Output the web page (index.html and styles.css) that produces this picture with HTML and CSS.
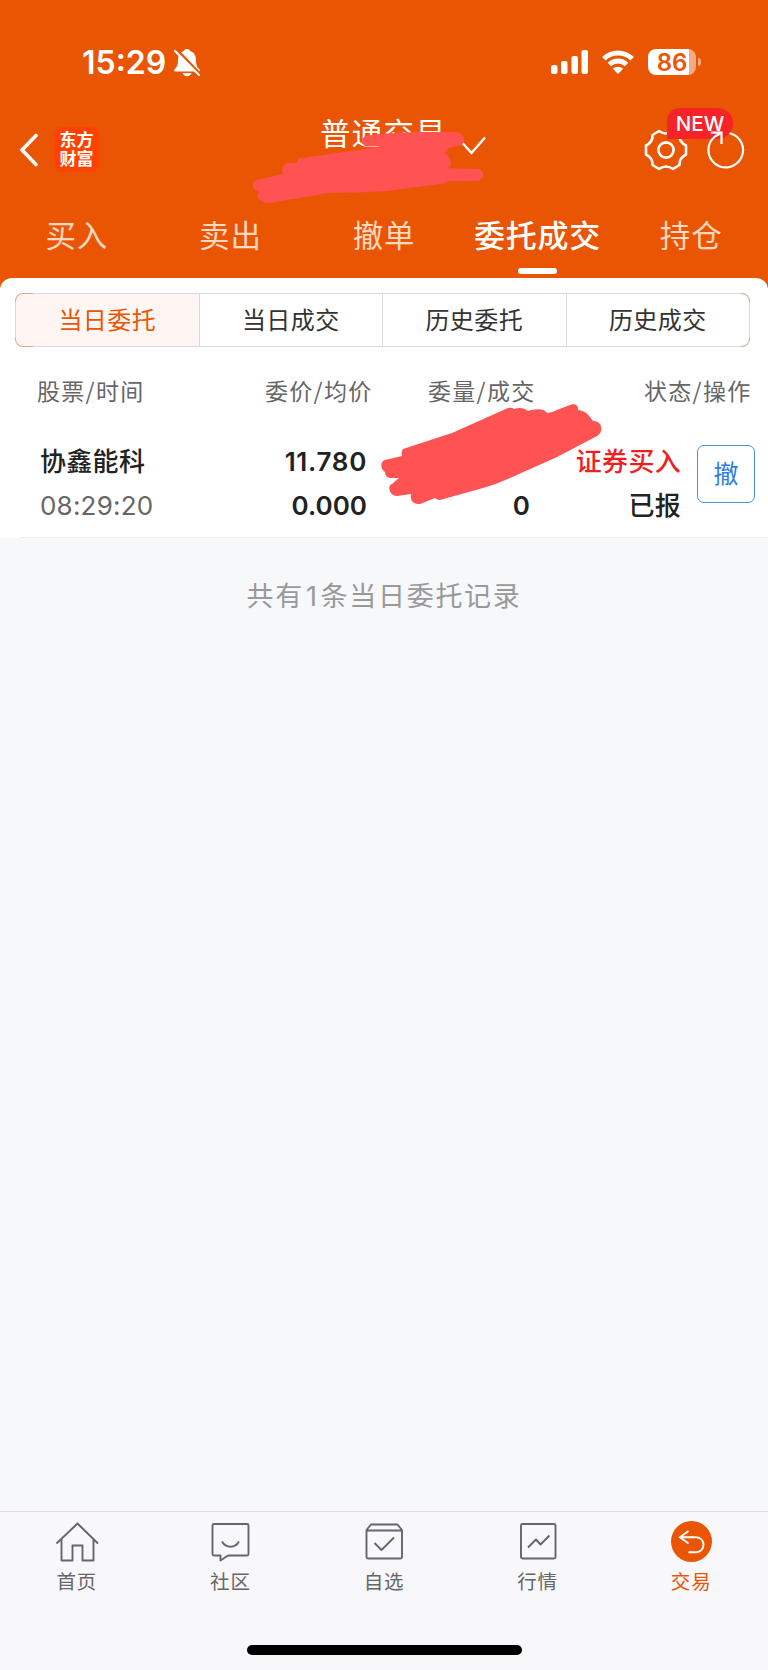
FILE: index.html
```
<!DOCTYPE html>
<html lang="zh-CN">

<head>
<meta charset="utf-8">
<title>委托成交</title>
<link rel="stylesheet" href="styles.css">
</head>

<body>

<div class="header">
	<div class="status-bar">
		<span class="clock">15:29</span>
		<svg class="bell" width="28" height="30" viewBox="0 0 28 30">
			<path d="M14 1c-2 0-3 1.200-3.400 2.200C6.500 4.500 5 8 5 12c0 5-1 7-3.500 9.500-.8 1-.3 2 .8 2h23.400c1.100 0 1.600-1 .8-2C24 19 23 17 23 12c0-4-1.500-7.500-5.600-8.800C17 2.200 16 1 14 1zM9.500 25h9c-.6 2-2.300 3.200-4.500 3.200S10.100 27 9.500 25z" fill="#fff"/>
			<path d="M3 1l24 25" stroke="#ea5504" stroke-width="3"/>
			<path d="M2 3l24 24" stroke="#fff" stroke-width="2.200" stroke-linecap="round"/>
		</svg>
		<svg class="signal" width="38" height="24" viewBox="0 0 38 24">
			<g fill="#fff">
				<rect x="0" y="15" width="6.500" height="9" rx="2"/>
				<rect x="10" y="11" width="6.500" height="13" rx="2"/>
				<rect x="20.500" y="6" width="6.500" height="18" rx="2"/>
				<rect x="30.500" y="0" width="6.500" height="24" rx="2"/>
			</g>
		</svg>
		<svg class="wifi" width="32" height="24" viewBox="0 0 32 24">
			<g fill="none" stroke="#fff" stroke-width="5">
				<path d="M1.800 8.800a20.200 20.200 0 0 1 28.400 0"/>
				<path d="M7.400 14.500a12.200 12.200 0 0 1 17.200 0"/>
			</g>
			<path d="M16 24l-5.200-5.200a7.400 7.400 0 0 1 10.400 0z" fill="#fff"/>
		</svg>
		<span class="battery">86</span>
		<span class="battery-cap"></span>
	</div>

	<div class="nav">
		<svg class="back" width="20" height="34" viewBox="0 0 20 34">
			<path d="M17 2.500L3 17l14 14.500" fill="none" stroke="#fff" stroke-width="3.600" stroke-linecap="round"/>
		</svg>
		<div class="logo">
			<div>东方</div>
			<div>财富</div>
		</div>
		<div class="title">普通交易</div>
		<svg class="check" width="26" height="20" viewBox="0 0 26 20">
			<path d="M1.500 7L10.500 17L24 1.500" fill="none" stroke="#fff" stroke-width="2.400"/>
		</svg>
		<svg class="scribble-title" width="236" height="76" viewBox="0 0 236 76">
			<path d="M113 5C132 2 155 1 175 1H201C208 1 212 4 212 8C212 12 210 15 204 15L197 17C196 20 194 22 191 22C196 24 199 27 199 32Q199 36 195 37L226 38C233 39 233 49 226 50H196Q193 53 188 53L135 60Q105 62 76 62L18 72C7 73 2 63 8 61C-1 60 -1 50 5 49L31 43C29 39 31 34 35 32H46Q45 27 50 27L113 18L131 15Q122 16 113 15Q107 10 113 5Z" fill="#ff5252"/>
		</svg>
		<svg class="gear" width="44" height="44" viewBox="0 0 44 44">
			<g fill="none" stroke="#fff" stroke-width="2.600" stroke-linejoin="round">
				<path d="M15 3Q22 8 29 3L35.500 7Q35 14 42 17.500V26.500Q35 30 35.500 37L29 41Q22 36 15 41L8.500 37Q9 30 2 26.500V17.500Q9 14 8.500 7Z"/>
				<circle cx="22" cy="22" r="7.600"/>
			</g>
		</svg>
		<div class="new-badge">NEW</div>
		<svg class="refresh" width="40" height="40" viewBox="0 0 40 40">
			<g fill="none" stroke="#fff" stroke-width="2.200">
				<path d="M23.500 3.200A17.300 17.300 0 1 1 9 6.500L15.500 2.700"/>
				<path d="M4.800 2.700H15.500V14"/>
			</g>
		</svg>
	</div>

	<div class="tabs">
		<div class="tab">买入</div>
		<div class="tab">卖出</div>
		<div class="tab">撤单</div>
		<div class="tab tab-active">委托成交</div>
		<div class="tab">持仓</div>
	</div>
</div>

<div class="sheet">
	<div class="segments">
		<div class="segment segment-active">当日委托</div>
		<div class="segment">当日成交</div>
		<div class="segment">历史委托</div>
		<div class="segment">历史成交</div>
	</div>

	<div class="columns">
		<span class="col-name">股票/时间</span>
		<span class="col-price">委价/均价</span>
		<span class="col-amount">委量/成交</span>
		<span class="col-state">状态/操作</span>
	</div>

	<div class="order">
		<div class="order-name">
			<div class="strong stock">协鑫能科</div>
			<div class="time">08:29:20</div>
		</div>
		<div class="order-price">
			<div class="strong price">11.780</div>
			<div class="strong">0.000</div>
		</div>
		<div class="order-amount">
			<div class="strong">&nbsp;</div>
			<div class="strong">0</div>
		</div>
		<div class="order-state">
			<div class="strong stock buy">证券买入</div>
			<div class="strong stock">已报</div>
		</div>
		<div class="cancel">撤</div>
		<svg class="scribble-amount" width="224" height="102" viewBox="0 0 224 102">
			<path d="M22 46L71 30L127 5Q131 4 133 6C139 4 143 5 147 8C154 6 163 5 166 10Q171 10 176 7L189 2C194 0 198 3 197 7Q205 8 209 14Q212 19 213 18C220 18 224 28 216 33L176 54L129 75Q116 81 102 85L59 97Q56 97 54 95L39 101C31 102 29 96 30 91L16 93C8 93 6 82 11 81L18 75H9Q4 74 4 69C-1 66 -1 58 4 57L21 53Q20 48 22 46Z" fill="#ff5252"/>
		</svg>
	</div>
</div>

<div class="total">共有<span class="total-count">1</span>条当日委托记录</div>

<div class="bottom-bar">
	<div class="menu">
		<div class="menu-item">
			<svg width="44" height="44" viewBox="0 0 44 44" fill="none" stroke="#666" stroke-width="1.900" stroke-linejoin="round">
				<path d="M1.500 23.500L22.500 3.500L43 23.500M6.500 19v21.500h11V25.500h10v15h11V19"/>
			</svg>
			<span>首页</span>
		</div>
		<div class="menu-item">
			<svg width="44" height="44" viewBox="0 0 44 44" fill="none" stroke="#666" stroke-width="1.900" stroke-linejoin="round">
				<path d="M6 4h33q1.500 0 1.500 1.500V34q0 1.500-1.500 1.500H20l-7.500 5v-5H6q-1.500 0-1.500-1.500V5.500Q4.500 4 6 4zM14 21.500c4 7 13 7 17 0"/>
			</svg>
			<span>社区</span>
		</div>
		<div class="menu-item">
			<svg width="44" height="44" viewBox="0 0 44 44" fill="none" stroke="#666" stroke-width="1.900" stroke-linejoin="round">
				<path d="M4.500 10L9 4.500h26.500l4.500 5.500V37q0 1.500-1.500 1.500H6q-1.500 0-1.500-1.500zM4.500 10.500H40M12.500 23l7 7L32 17.500"/>
			</svg>
			<span>自选</span>
		</div>
		<div class="menu-item">
			<svg width="44" height="44" viewBox="0 0 44 44" fill="none" stroke="#666" stroke-width="1.900" stroke-linejoin="round">
				<rect x="5" y="4" width="34.500" height="34.500" rx="1.500"/>
				<path d="M12 27.500l8-8 4.500 5L33.500 15.500"/>
			</svg>
			<span>行情</span>
		</div>
		<div class="menu-item menu-active">
			<svg width="44" height="44" viewBox="0 0 44 44">
				<circle cx="22.500" cy="21.500" r="20.500" fill="#ea5504"/>
				<path d="M19.500 11L11 17.200L19.500 23.500M11.500 17.200H27c10 0 10 15 0 15h-7.500" fill="none" stroke="#fff" stroke-width="1.900"/>
			</svg>
			<span>交易</span>
		</div>
	</div>
	<div class="home-indicator"></div>
</div>

</body>

</html>
```
FILE: styles.css
```
html, body {
	margin: 0;
	padding: 0;
}

body {
	display: flex;
	flex-direction: column;
	height: 1670px;
	background-color: #f7f8fa;
	font-family: "Noto Sans CJK SC", sans-serif;
	overflow: hidden;
}

.header {
	height: 290px;
	background-color: #ea5504;
	color: #fff;
}

.status-bar {
	display: flex;
	align-items: center;
	height: 100px;
	padding: 24px 67px 0 82px;
	box-sizing: border-box;
	font-family: Inter, sans-serif;
	font-weight: 600;
}

.clock {
	width: 85px;
	padding-top: 2px;
	font-size: 32px;
	line-height: 40px;
	white-space: nowrap;
}

.bell {
	margin: 2px 0 0 6px;
}

.signal {
	margin-left: auto;
}

.wifi {
	margin-left: 13px;
}

.battery {
	width: 48px;
	height: 26px;
	margin-left: 14px;
	border-radius: 8px;
	background: linear-gradient(to right, #fff 41px, #f5aa82 41px);
	color: #ea5504;
	font-size: 24px;
	line-height: 27px;
	text-align: center;
}

.battery-cap {
	width: 3px;
	height: 8px;
	margin-left: 2px;
	border-radius: 0 4px 4px 0;
	background-color: #f5aa82;
}

.nav {
	position: relative;
	display: flex;
	height: 100px;
}

.back {
	margin: 33px 0 0 19px;
}

.logo {
	width: 45px;
	height: 45px;
	margin: 27px 0 0 15px;
	padding-top: 2px;
	box-sizing: border-box;
	border-radius: 8px;
	background-color: #ff4200;
	font-size: 17px;
	font-weight: 700;
	line-height: 19px;
	text-align: center;
}

.title {
	width: 126px;
	margin: 12px 0 0 221px;
	font-size: 30.5px;
	line-height: 40px;
	letter-spacing: 1.2px;
	white-space: nowrap;
}

.check {
	margin: 36px 0 0 15px;
}

.scribble-title {
	position: absolute;
	left: 252px;
	top: 31px;
}

.gear {
	margin: 28px 80px 0 auto;
}

.refresh {
	position: absolute;
	left: 706px;
	top: 30px;
}

.new-badge {
	position: absolute;
	left: 667px;
	top: 8px;
	width: 66px;
	height: 31px;
	border-radius: 13px 16px 16px 0;
	background-color: #f62328;
	font-family: Inter, sans-serif;
	font-size: 20.5px;
	font-weight: 500;
	line-height: 31px;
	text-align: center;
}

.tabs {
	display: flex;
}

.tab {
	display: flex;
	flex-direction: column;
	align-items: center;
	flex: 1;
	padding-top: 12px;
	color: #ffd9bf;
	font-size: 30.5px;
	line-height: 44px;
	letter-spacing: 0.8px;
}

.tab-active {
	color: #fff;
	font-size: 31px;
	font-weight: 500;
}

.tab-active::after {
	content: "";
	width: 39px;
	height: 6px;
	margin-top: 12px;
	border-radius: 3px;
	background-color: #fff;
}

.sheet {
	height: 260px;
	margin-top: -12px;
	border-radius: 12px 12px 0 0;
	background-color: #fff;
}

.segments {
	position: relative;
	display: flex;
	height: 54px;
	margin: 0 18px 0 15px;
	top: 15px;
	box-sizing: border-box;
	border: 1px solid #d9dae0;
	border-radius: 8px;
}

/* tinted rounded ends of the segmented control */
.segments::before, .segments::after {
	content: "";
	position: absolute;
	top: -1px;
	bottom: -1px;
	width: 18px;
	box-sizing: border-box;
	border: 1px solid #e9a585;
	-webkit-mask-image: linear-gradient(#000 9px, transparent 9px, transparent 45px, #000 45px);
	mask-image: linear-gradient(#000 9px, transparent 9px, transparent 45px, #000 45px);
}

.segments::before {
	left: -1px;
	border-right: none;
	border-radius: 8px 0 0 8px;
}

.segments::after {
	right: -1px;
	width: 9px;
	border-left: none;
	border-radius: 0 8px 8px 0;
}

.segment {
	flex: 1;
	border-left: 1px solid #d9dae0;
	color: #333;
	font-size: 24px;
	line-height: 50px;
	letter-spacing: 0.4px;
	text-align: center;
}

.segment-active {
	border-left: none;
	border-radius: 7px 0 0 7px;
	background-color: #fff5f2;
	color: #ea5504;
}

.columns {
	display: flex;
	padding: 40px 16px 0 37px;
	color: #666;
	font-size: 23px;
	line-height: 36px;
	letter-spacing: 1.3px;
	white-space: nowrap;
}

.col-name {
	width: 228px;
}

.col-price {
	width: 163px;
}

.col-amount {
	width: 216px;
}

.order {
	position: relative;
	display: flex;
	height: 130px;
	padding: 32px 0 0 40px;
	box-sizing: border-box;
	color: #222;
	font-family: Inter, "Noto Sans CJK SC", sans-serif;
	font-size: 26px;
	line-height: 44px;
	white-space: nowrap;
}

.order::after {
	content: "";
	position: absolute;
	left: 19px;
	right: 0;
	bottom: 0;
	height: 1px;
	background-color: #eeeff2;
}

.strong {
	height: 44px;
	font-weight: 600;
}

.stock {
	font-weight: 500;
	letter-spacing: 0.3px;
}

.price {
	letter-spacing: 0.7px;
}

.order-name {
	width: 147px;
}

.time {
	color: #666;
	letter-spacing: 0.2px;
}

.order-price {
	width: 180px;
	text-align: right;
}

.order-amount {
	width: 163px;
	text-align: right;
}

.order-state {
	width: 151px;
	text-align: right;
}

.buy {
	color: #f01f1f;
}

.cancel {
	width: 58px;
	height: 58px;
	margin: 5px 0 0 16px;
	box-sizing: border-box;
	border: 1.5px solid #4a90e2;
	border-radius: 7px;
	color: #2f7de1;
	font-size: 25px;
	line-height: 56px;
	text-align: center;
}

.scribble-amount {
	position: absolute;
	left: 381px;
	top: -5px;
}

.total {
	padding-top: 36px;
	color: #999;
	font-size: 27px;
	line-height: 42px;
	letter-spacing: 1.7px;
	text-align: center;
}

.total-count {
	font-family: Inter, sans-serif;
	margin: 0 2px;
}

.bottom-bar {
	height: 159px;
	margin-top: auto;
	box-sizing: border-box;
	border-top: 1px solid #dfe0e3;
	background-color: #f8f8fb;
}

.menu {
	display: flex;
	height: 133px;
}

.menu-item {
	display: flex;
	flex-direction: column;
	align-items: center;
	flex: 1;
	padding-top: 8px;
	color: #666;
	font-size: 19.5px;
	line-height: 34px;
	letter-spacing: 0.8px;
}

.menu-active {
	color: #ea5504;
}

.home-indicator {
	width: 275px;
	height: 10px;
	margin: 0 auto;
	border-radius: 5px;
	background-color: #000;
}
```
